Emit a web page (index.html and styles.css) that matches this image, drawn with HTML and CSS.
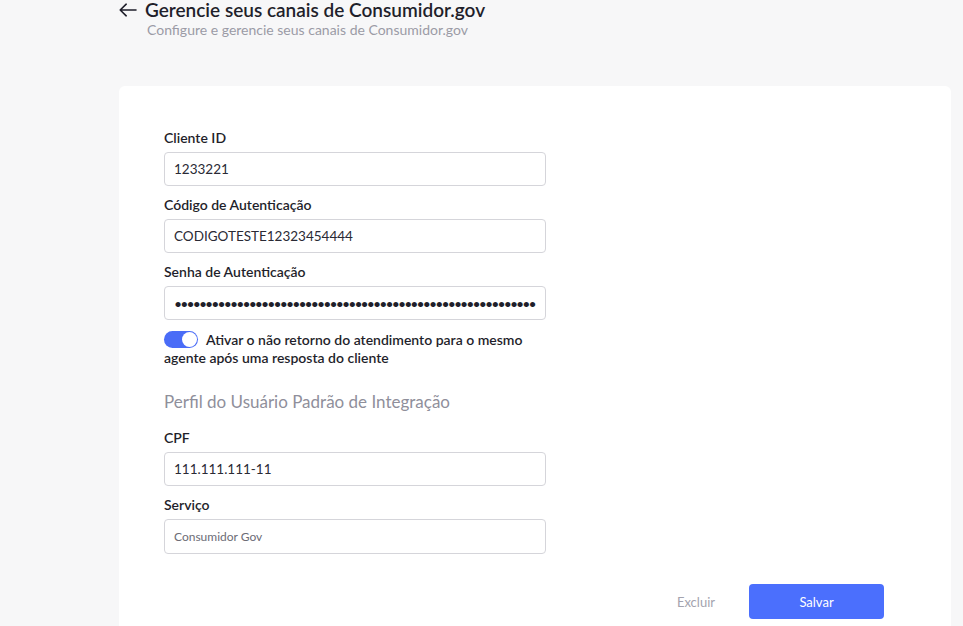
FILE: index.html
```html
<!DOCTYPE html>
<html lang="pt-BR">
<head>
<meta charset="utf-8">
<title>Consumidor.gov</title>
<link rel="stylesheet" href="styles.css">
</head>
<body>
<div class="page">
  <header class="head">
    <div class="title-row">
      <svg class="back" width="18" height="14" viewBox="0 0 18 14" fill="none" stroke="#1f1f2b" stroke-width="1.6" stroke-linecap="round" stroke-linejoin="round"><path d="M17 7H1.2M7.2 1.2L1.2 7l6 5.8"/></svg>
      <h1 class="title">Gerencie seus canais de Consumidor.gov</h1>
    </div>
    <p class="subtitle">Configure e gerencie seus canais de Consumidor.gov</p>
  </header>
  <section class="card">
    <div class="form">
      <div class="field">
        <label class="label">Cliente ID</label>
        <div class="input">1233221</div>
      </div>
      <div class="field">
        <label class="label">Código de Autenticação</label>
        <div class="input">CODIGOTESTE12323454444</div>
      </div>
      <div class="field">
        <label class="label">Senha de Autenticação</label>
        <div class="input dots">••••••••••••••••••••••••••••••••••••••••••••••••••••••••••</div>
      </div>
      <div class="toggle-row">
        <span class="toggle"><span class="knob"></span></span>
        Ativar o não retorno do atendimento para o mesmo agente após uma resposta do cliente
      </div>
      <h2 class="section">Perfil do Usuário Padrão de Integração</h2>
      <div class="field">
        <label class="label">CPF</label>
        <div class="input">111.111.111-11</div>
      </div>
      <div class="field">
        <label class="label">Serviço</label>
        <div class="input small">Consumidor Gov</div>
      </div>
    </div>
    <div class="actions">
      <button class="btn-link">Excluir</button>
      <button class="btn-primary">Salvar</button>
    </div>
  </section>
</div>
</body>
</html>
```
FILE: styles.css
```css
* { box-sizing: border-box; }
html, body { margin: 0; padding: 0; }
body {
  background: #f7f7f8;
  font-family: Lato, "Open Sans", sans-serif;
  color: #1f1f2b;
  height: 626px;
  overflow: hidden;
}
.page { padding-left: 119px; }
.head { height: 86px; }
.title-row {
  display: flex;
  align-items: center;
  gap: 8px;
  height: 19px;
}
.back { flex: none; }
.title {
  margin: 0;
  font-size: 19px;
  font-weight: 600;
  line-height: 19px;
  color: #1f1f2b;
}
.subtitle {
  margin: 2px 0 0 28px;
  font-size: 14px;
  line-height: 17px;
  color: #9b9ba6;
}
.card {
  width: 832px;
  height: 560px;
  background: #fff;
  border-radius: 6px;
  padding: 44px 67px 0 45px;
}
.form { width: 382px; }
.field { margin-bottom: 11px; }
.label {
  display: block;
  font-size: 14px;
  font-weight: 600;
  line-height: 16px;
  margin-bottom: 6px;
}
.input {
  height: 34px;
  border: 1px solid #d5d5da;
  border-radius: 4px;
  padding: 0 9px;
  display: flex;
  align-items: center;
  font-size: 13.5px;
  color: #2a2a35;
}
.input.dots {
  font-size: 14px;
  letter-spacing: -1.9px;
  white-space: nowrap;
  overflow: hidden;
  color: #1f1f2b;
}
.input.small { height: 35px; font-size: 12px; color: #6c6c76; }
.toggle-row {
  margin-top: 1px;
  font-size: 14px;
  font-weight: 600;
  line-height: 18px;
  color: #1f1f2b;
}
.toggle {
  display: inline-block;
  vertical-align: -3px;
  width: 34px;
  height: 17px;
  border-radius: 9px;
  background: #4a6cf7;
  position: relative;
  margin-right: 5px;
}
.knob {
  position: absolute;
  right: 1px;
  top: 1px;
  width: 15px;
  height: 15px;
  border-radius: 50%;
  background: #fff;
}
.section {
  margin: 25px 0 18px;
  font-size: 17px;
  font-weight: 400;
  line-height: 20px;
  color: #8f8f9b;
}
.actions {
  display: flex;
  justify-content: flex-end;
  align-items: center;
  gap: 34px;
  margin-top: 30px;
}
.btn-link {
  border: 0;
  background: none;
  font-family: inherit;
  font-size: 13px;
  color: #a3a3ae;
  padding: 0;
}
.btn-primary {
  border: 0;
  width: 135px;
  height: 35px;
  border-radius: 4px;
  background: #4b6ffd;
  color: #fff;
  font-family: inherit;
  font-size: 13px;
}
```
